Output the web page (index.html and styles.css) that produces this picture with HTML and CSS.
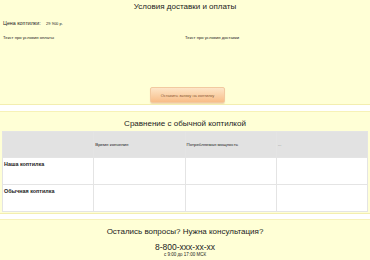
FILE: index.html
```html
<!DOCTYPE html>
<html lang="ru">

<head>
    <meta charset="UTF-8">
    <meta name="viewport" content="width=device-width, initial-scale=1.0">
    <title>Коптилка</title>
    <link rel="stylesheet" href="styles.css">
</head>

<body>
    <!-- Условия доставки -->
    <section class="block delivery">
        <h2>Условия доставки и оплаты</h2>
        <p class="price">Цена коптилки: <span>29 900 р.</span></p>
        <div class="terms">
            <p>Текст про условия оплаты</p>
            <p>Текст про условия доставки</p>
        </div>
        <div class="order">
            <button class="btn">Оставить заявку на коптилку</button>
        </div>
    </section>

    <!-- Сравнение -->
    <section class="block compare">
        <h2>Сравнение с обычной коптилкой</h2>
        <table class="compare-table">
            <tr>
                <th></th>
                <th>Время копчения</th>
                <th>Потребляемая мощность</th>
                <th>...</th>
            </tr>
            <tr>
                <td class="name">Наша коптилка</td>
                <td></td>
                <td></td>
                <td></td>
            </tr>
            <tr>
                <td class="name">Обычная коптилка</td>
                <td></td>
                <td></td>
                <td></td>
            </tr>
        </table>
    </section>

    <!-- Консультация -->
    <section class="block contacts">
        <h2>Остались вопросы? Нужна консультация?</h2>
        <div class="phone">8-800-xxx-xx-xx</div>
        <div class="hours">с 9:00 до 17:00 МСК</div>
    </section>
</body>

</html>
```

FILE: styles.css
```css
body {
    font-family: "Liberation Sans", Arial, sans-serif;
    background-color: #fff;
    color: #222;
    margin: 0;
    padding: 0;
}

.block {
    background-color: #ffffd6;
    border-top: 1px solid #f7f2b8;
    border-bottom: 1px solid #f3eeb0;
    margin-bottom: 5px;
}

.block h2 {
    font-size: 8px;
    line-height: 9px;
    font-weight: normal;
    text-align: center;
    margin: 0;
}

/* delivery */
.delivery {
    border-top: none;
    height: 104px;
    display: flex;
    flex-direction: column;
    margin-bottom: 6px;
}

.delivery h2 {
    padding-top: 2px;
}

.price {
    font-size: 5.3px;
    margin: 9px 3px 0;
}

.price span {
    font-size: 4px;
    margin-left: 4px;
}

.terms {
    display: grid;
    grid-template-columns: 1fr 1fr;
    margin-top: 9px;
    padding: 0 3px;
}

.terms p {
    font-size: 4.2px;
    margin: 0;
}

.order {
    margin-top: auto;
    text-align: center;
    padding: 0 0 1px 5px;
}

.btn {
    background: linear-gradient(#fde6c8, #f8bd88);
    color: #8a5a34;
    font-family: inherit;
    font-size: 4px;
    width: 75px;
    height: 16px;
    border: 1px solid #f2c9a0;
    border-radius: 2px;
    box-shadow: 0 1px 1px #f0d9b0;
    padding: 0;
}

/* compare */
.compare {
    padding: 0 2px 1px;
}

.compare h2 {
    padding: 7px 0 3px;
}

.compare-table {
    width: 100%;
    border-collapse: collapse;
    table-layout: fixed;
    background-color: #fff;
}

.compare-table th,
.compare-table td {
    border: 1px solid #e4e4e4;
    font-size: 4.4px;
    text-align: left;
    padding: 0 1px;
}

.compare-table th {
    background-color: #e2e2e2;
    font-weight: normal;
    vertical-align: middle;
    height: 25px;
}

.compare-table td {
    height: 23px;
    vertical-align: top;
    padding-top: 3px;
}

.compare-table td.name {
    font-size: 5.4px;
    font-weight: bold;
}

/* contacts */
.contacts {
    text-align: center;
    padding: 7px 0 4px;
}

.phone {
    font-size: 8.5px;
    line-height: 9px;
    margin-top: 7px;
}

.hours {
    font-size: 4.5px;
    line-height: 6px;
}
```
